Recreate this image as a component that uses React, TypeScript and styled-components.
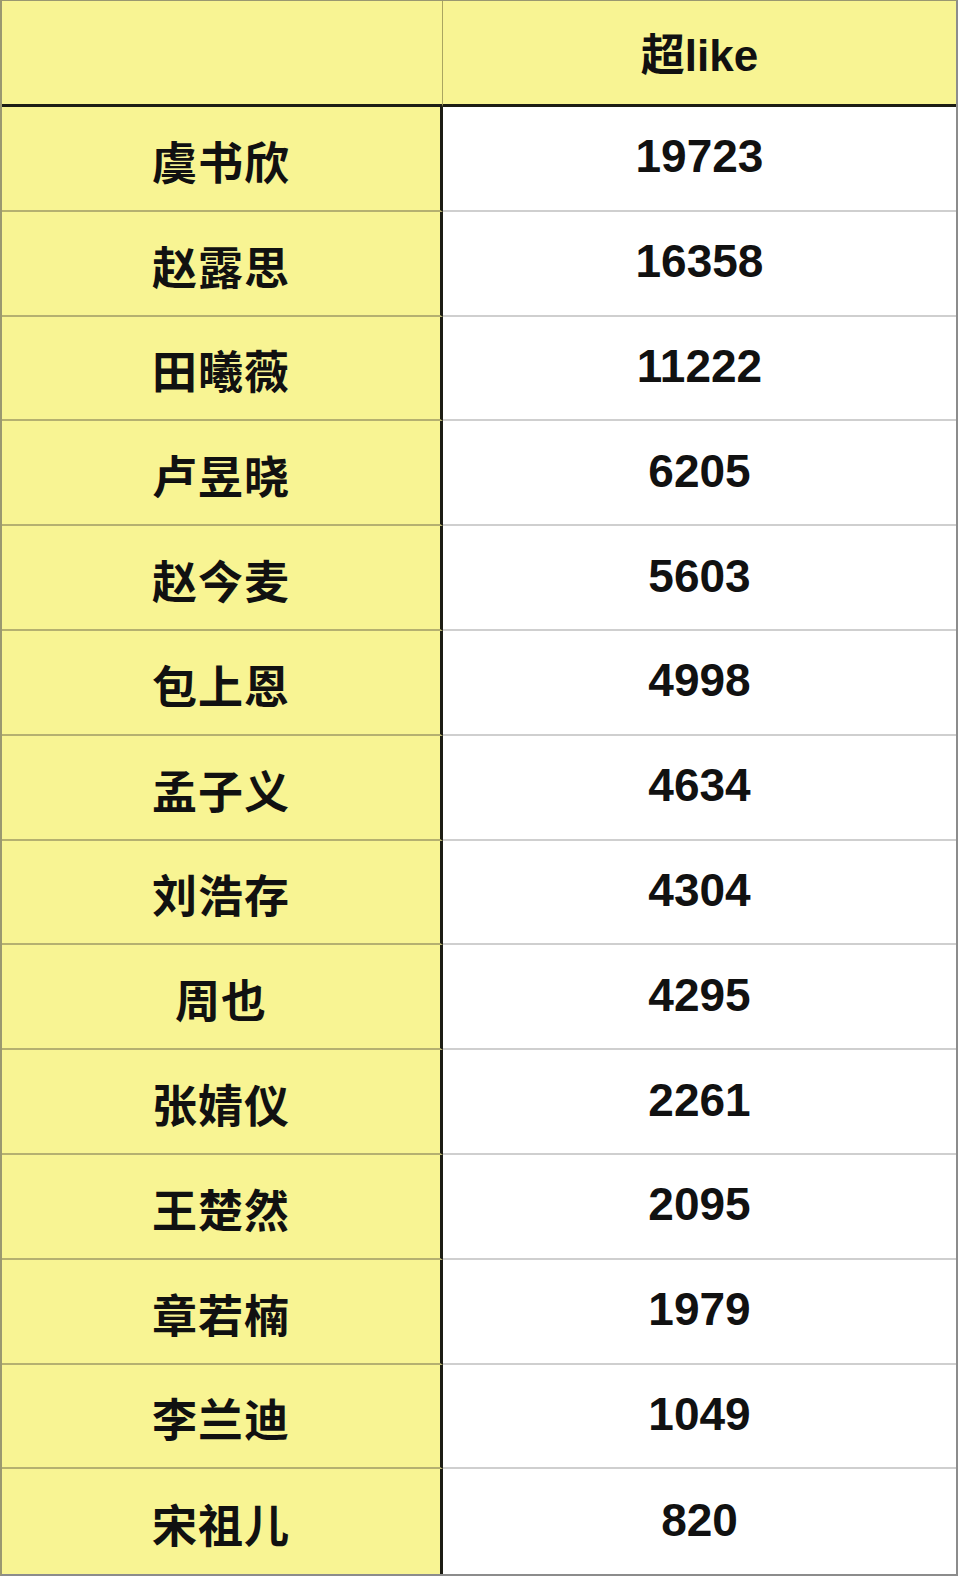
import styled, { createGlobalStyle } from 'styled-components';

const rows: [string, string][] = [
    ['虞书欣', '19723'],
    ['赵露思', '16358'],
    ['田曦薇', '11222'],
    ['卢昱晓', '6205'],
    ['赵今麦', '5603'],
    ['包上恩', '4998'],
    ['孟子义', '4634'],
    ['刘浩存', '4304'],
    ['周也', '4295'],
    ['张婧仪', '2261'],
    ['王楚然', '2095'],
    ['章若楠', '1979'],
    ['李兰迪', '1049'],
    ['宋祖儿', '820'],
];

const GlobalStyle = createGlobalStyle`
html, body {
    margin: 0;
    padding: 0;
    background: #fff;
    overflow: hidden;
}
`;

export default function App() {
    return (
        <>
            <GlobalStyle />
            <Sheet>
                <HeaderCell $side="left" />
                <HeaderCell $side="right">超like</HeaderCell>
                {rows.map(([name, count], i) => (
                    <Row key={name} $last={i === rows.length - 1}>
                        <NameCell>{name}</NameCell>
                        <CountCell>{count}</CountCell>
                    </Row>
                ))}
            </Sheet>
        </>
    );
}

const Sheet = styled.div`
width: 958px;
box-sizing: border-box;
display: grid;
grid-template-columns: 441px 1fr;
border: 2px solid #9a9870;
border-right-color: #8c8c8c;
border-bottom-color: #8c8c8c;
border-top-width: 1px;
`;

const HeaderCell = styled.div<{ $side: 'left' | 'right' }>`
height: 106px;
box-sizing: border-box;
background: #f8f493;
border-bottom: 3px solid #1d1d14;
border-right: ${p => (p.$side === 'left' ? '1px solid #aaa560' : 'none')};
display: flex;
align-items: center;
justify-content: center;
padding-bottom: 2px;
font-family: "Liberation Sans", "Noto Sans CJK SC", sans-serif;
font-weight: 700;
font-size: 44px;
color: #111;
`;

const Row = styled.div<{ $last: boolean }>`
display: contents;

> * {
    height: 104.8px;
    box-sizing: border-box;
    border-bottom: ${p => (p.$last ? 'none' : '2px solid')};
}
`;

const NameCell = styled.div`
background: #f8f493;
border-bottom-color: #b5b070 !important;
border-right: 3px solid #1d1d14;
display: flex;
align-items: center;
justify-content: center;
padding-top: 4px;
font-family: "Noto Sans CJK SC", sans-serif;
font-weight: 700;
font-size: 45px;
letter-spacing: 1px;
color: #111;
`;

const CountCell = styled.div`
background: #fff;
border-bottom-color: #cfcfcf !important;
display: flex;
align-items: center;
justify-content: center;
padding-bottom: 4px;
font-family: "Liberation Sans", Arial, sans-serif;
font-weight: 700;
font-size: 46px;
color: #111;
`;
